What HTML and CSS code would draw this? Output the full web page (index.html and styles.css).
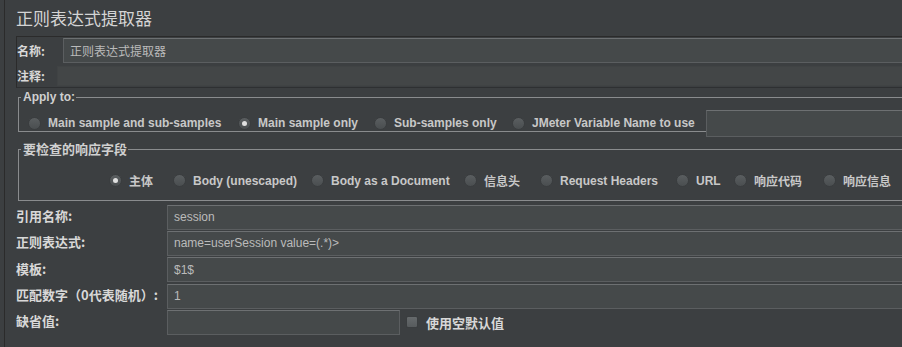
FILE: index.html
```html
<!DOCTYPE html>
<html>
<head>
    <title>正则表达式提取器</title>
    <meta charset="utf-8">
    <link rel="stylesheet" href="styles.css">
</head>
<body>
<div class="panel">
    <h1 class="title">正则表达式提取器</h1>

    <!-- name / comments -->
    <div class="name-box">
        <div class="name-row">
            <label class="name-label">名称:</label>
            <div class="field name-field">正则表达式提取器</div>
        </div>
        <div class="comment-row">
            <label class="name-label comment-label">注释:</label>
            <div class="field comment-field"></div>
        </div>
    </div>

    <!-- Apply to -->
    <fieldset class="group apply-group">
        <legend>Apply to:</legend>
        <div class="radio-row">
            <span class="radio"></span><span class="radio-text w-main-sub">Main sample and sub-samples</span>
            <span class="radio checked"></span><span class="radio-text w-main">Main sample only</span>
            <span class="radio"></span><span class="radio-text w-sub">Sub-samples only</span>
            <span class="radio"></span><span class="radio-text w-var">JMeter Variable Name to use</span>
            <div class="field var-field"></div>
        </div>
    </fieldset>

    <!-- field to check -->
    <fieldset class="group check-group">
        <legend>要检查的响应字段</legend>
        <div class="radio-row field-row">
            <span class="radio checked"></span><span class="radio-text w1">主体</span>
            <span class="radio"></span><span class="radio-text w2">Body (unescaped)</span>
            <span class="radio"></span><span class="radio-text w3">Body as a Document</span>
            <span class="radio"></span><span class="radio-text w4">信息头</span>
            <span class="radio"></span><span class="radio-text w5">Request Headers</span>
            <span class="radio"></span><span class="radio-text w6">URL</span>
            <span class="radio"></span><span class="radio-text w7">响应代码</span>
            <span class="radio"></span><span class="radio-text">响应信息</span>
        </div>
    </fieldset>

    <!-- extractor settings -->
    <div class="form">
        <div class="form-row">
            <label class="form-label">引用名称:</label>
            <div class="field form-field">session</div>
        </div>
        <div class="form-row">
            <label class="form-label">正则表达式:</label>
            <div class="field form-field">name=userSession value=(.*)&gt;</div>
        </div>
        <div class="form-row">
            <label class="form-label">模板:</label>
            <div class="field form-field">$1$</div>
        </div>
        <div class="form-row">
            <label class="form-label">匹配数字（0代表随机）:</label>
            <div class="field form-field">1</div>
        </div>
        <div class="form-row">
            <label class="form-label">缺省值:</label>
            <div class="field default-field"></div>
            <span class="checkbox"></span>
            <span class="check-text">使用空默认值</span>
        </div>
    </div>
</div>
</body>
</html>
```

FILE: styles.css
```css
body {
    margin: 0;
    padding: 0;
    background-color: #3c3f41;
    color: #bbbbbb;
    font-family: "Liberation Sans", "Noto Sans CJK SC", sans-serif;
    font-size: 12px;
    overflow: hidden;
    width: 902px;
    height: 347px;
}

.panel {
    border-left: 1px solid #2b2b2b;
    margin-left: 4px;
    height: 347px;
    width: 1000px;
}

.title {
    margin: 0;
    height: 36px;
    line-height: 36px;
    padding-left: 11px;
    font-size: 17px;
    font-weight: normal;
    color: #d4d4d4;
    font-family: "Noto Sans CJK SC", sans-serif;
}

/* name + comments box */
.name-box {
    margin-left: 11px;
    border-top: 1px solid #2b2b2b;
    border-left: 1px solid #2b2b2b;
    border-bottom: 1px solid #2e3032;
    height: 50px;
}

.name-row,
.comment-row {
    display: flex;
    align-items: center;
}

.name-row {
    height: 27px;
}

.comment-row {
    height: 23px;
}

.name-label {
    width: 46px;
    font-weight: bold;
    color: #d8d8d8;
    font-size: 12px;
    font-family: "Noto Sans CJK SC", sans-serif;
}

.comment-label {
    width: 40px;
}

.field {
    box-sizing: border-box;
    background-color: #45494a;
    border: 1px solid #5b5e60;
    border-top-color: #6d7072;
    color: #bbbbbb;
    padding-left: 6px;
    font-family: "Liberation Sans", "Noto Sans CJK SC", sans-serif;
    font-size: 12px;
    display: flex;
    align-items: center;
}

.name-field {
    flex: 1;
    height: 25px;
    font-family: "Noto Sans CJK SC", sans-serif;
}

.comment-field {
    flex: 1;
    height: 20px;
    border-color: #404344;
    background-color: #434647;
}

/* groups */
.group {
    margin: 0 0 0 13px;
    border: 1px solid #8a8c8e;
    border-right: none;
    padding: 0;
}

.group legend {
    padding: 0 1px 0 2px;
    margin-left: 2px;
    font-weight: bold;
    color: #d0d0d0;
    font-size: 12px;
    line-height: 14px;
}

.apply-group {
    margin-top: 2px;
    height: 40px;
}

.check-group {
    margin-top: 10px;
    height: 57px;
}

.check-group legend {
    font-family: "Noto Sans CJK SC", sans-serif;
    font-size: 13px;
}

.radio-row {
    display: flex;
    align-items: center;
    height: 38px;
    padding-left: 9px;
}

.field-row {
    height: 49px;
    padding-left: 90px;
}

.radio {
    width: 13px;
    height: 13px;
    border-radius: 50%;
    background: linear-gradient(#5a5e60, #4a4e50);
    border: 1px solid #3a3d3f;
    box-sizing: border-box;
    margin-right: 7px;
    position: relative;
    flex-shrink: 0;
}

.radio.checked::after {
    content: "";
    position: absolute;
    left: 3px;
    top: 3px;
    width: 5px;
    height: 5px;
    border-radius: 50%;
    background-color: #e0e0e0;
}

.radio-text {
    font-weight: bold;
    color: #c8c8c8;
    font-size: 12px;
    white-space: nowrap;
    font-family: "Liberation Sans", "Noto Sans CJK SC", sans-serif;
}

.w-main-sub { width: 190px; }
.w-main { width: 116px; }
.w-sub { width: 118px; }
.w-var { width: 174px; }

.var-field {
    width: 300px;
    height: 27px;
}

.w1 { width: 44px; }
.w2 { width: 118px; }
.w3 { width: 133px; }
.w4 { width: 56px; }
.w5 { width: 116px; }
.w6 { width: 38px; }
.w7 { width: 69px; }

/* form rows */
.form {
    margin-left: 11px;
    margin-top: 3px;
}

.form-row {
    display: flex;
    align-items: center;
    height: 26.3px;
}

.form-label {
    width: 151px;
    font-weight: bold;
    color: #d8d8d8;
    font-size: 13px;
    font-family: "Noto Sans CJK SC", sans-serif;
    white-space: nowrap;
    margin-top: -3px;
}

.form-field {
    flex: 1;
    height: 25px;
}

.default-field {
    width: 233px;
    height: 25px;
}

.checkbox {
    width: 12px;
    height: 12px;
    margin-left: 6px;
    margin-right: 8px;
    background: linear-gradient(#666a6c, #575b5d);
    border: 1px solid #3a3d3f;
    border-radius: 2px;
    box-sizing: border-box;
}

.check-text {
    font-weight: bold;
    color: #d8d8d8;
    font-size: 13px;
    font-family: "Noto Sans CJK SC", sans-serif;
}
```
